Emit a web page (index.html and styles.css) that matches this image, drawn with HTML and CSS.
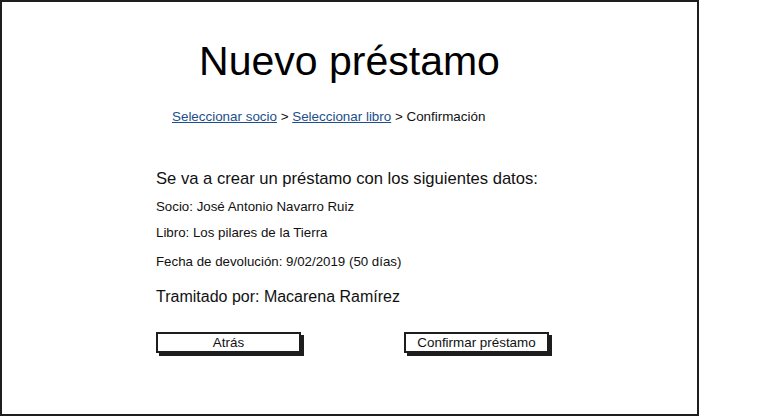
FILE: index.html
```html
<!DOCTYPE html>
<html lang="es">
<head>
<meta charset="utf-8">
<title>Nuevo préstamo</title>
<link rel="stylesheet" href="styles.css">
</head>
<body>
<div class="frame">
  <h1 class="title">Nuevo préstamo</h1>
  <nav class="crumbs"><a href="#">Seleccionar socio</a> &gt; <a href="#">Seleccionar libro</a> &gt; Confirmación</nav>
  <div class="content">
    <p class="lead">Se va a crear un préstamo con los siguientes datos:</p>
    <p class="row row-socio">Socio: José Antonio Navarro Ruiz</p>
    <p class="row row-libro">Libro: Los pilares de la Tierra</p>
    <p class="row row-fecha">Fecha de devolución: 9/02/2019 (50 días)</p>
    <p class="clerk">Tramitado por: Macarena Ramírez</p>
    <div class="actions">
      <button class="btn">Atrás</button>
      <button class="btn">Confirmar préstamo</button>
    </div>
  </div>
</div>
</body>
</html>
```
FILE: styles.css
```css
html, body {
  margin: 0;
  padding: 0;
  background: #fff;
}
body {
  font-family: "Liberation Sans", Arial, sans-serif;
  color: #111;
}
.frame {
  box-sizing: border-box;
  width: 699px;
  height: 416px;
  border: 2px solid #1e1e1e;
  padding-top: 36px;
  display: flex;
  flex-direction: column;
}
.title {
  margin: 0;
  font-weight: normal;
  font-size: 41px;
  line-height: 46px;
  text-align: center;
  color: #000;
}
.crumbs {
  margin-top: 25px;
  padding-left: 170px;
  font-size: 13.4px;
  line-height: 16px;
  color: #111;
}
.crumbs a {
  color: #1d4f8c;
  text-decoration: underline;
}
.content {
  padding-left: 154px;
  display: flex;
  flex-direction: column;
}
.lead {
  margin: 44px 0 0;
  font-size: 16.6px;
  line-height: 20px;
}
.row {
  margin: 0;
  font-size: 13.3px;
  line-height: 16px;
}
.row-socio { margin-top: 10px; }
.row-libro { margin-top: 10px; }
.row-fecha { margin-top: 13px; }
.clerk {
  margin: 17px 0 0;
  font-size: 16px;
  line-height: 20px;
}
.actions {
  margin-top: 25px;
  display: flex;
  gap: 103px;
}
.btn {
  box-sizing: border-box;
  width: 145px;
  height: 21px;
  padding: 0;
  border: 2px solid #1e1e1e;
  background: #fff;
  box-shadow: 3px 3px 0 #1e1e1e;
  font-family: "Liberation Sans", Arial, sans-serif;
  font-size: 13.4px;
  color: #111;
}
```
